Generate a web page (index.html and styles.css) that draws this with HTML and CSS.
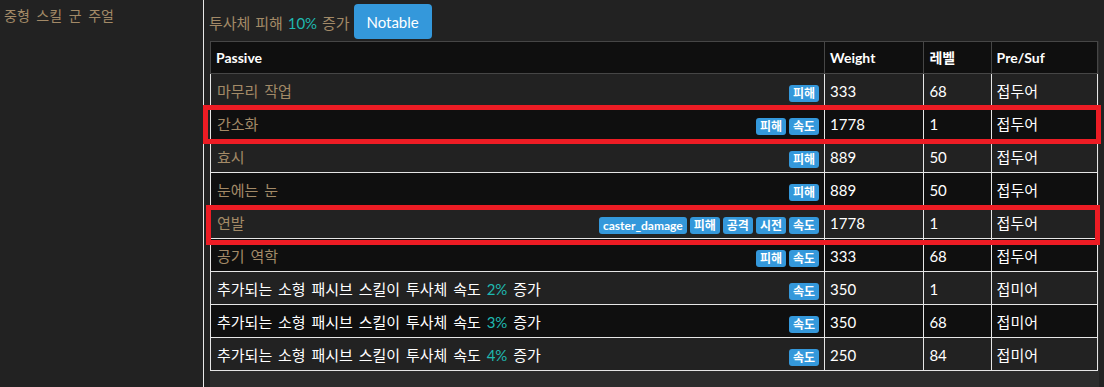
FILE: index.html
```html
<!DOCTYPE html>
<html lang="ko">
<head>
<meta charset="utf-8">
<link rel="stylesheet" href="styles.css">
</head>
<body>
<div class="page">
  <aside class="sidebar">
    <div class="side-item">중형 스킬 군 주얼</div>
  </aside>
  <main class="main">
    <div class="topline">
      <span class="title">투사체 피해 <span class="num">10%</span> 증가</span>
      <button class="btn">Notable</button>
    </div>
    <div class="table-wrap">
      <table class="mods">
        <thead>
          <tr><th class="c-passive">Passive</th><th class="c-weight">Weight</th><th class="c-level">레벨</th><th class="c-ps">Pre/Suf</th></tr>
        </thead>
        <tbody>
          <tr><td><div class="cell"><span class="name">마무리 작업</span><span class="tags"><span class="tag">피해</span></span></div></td><td>333</td><td>68</td><td>접두어</td></tr>
          <tr><td><div class="cell"><span class="name">간소화</span><span class="tags"><span class="tag">피해</span><span class="tag">속도</span></span></div></td><td>1778</td><td>1</td><td>접두어</td></tr>
          <tr><td><div class="cell"><span class="name">효시</span><span class="tags"><span class="tag">피해</span></span></div></td><td>889</td><td>50</td><td>접두어</td></tr>
          <tr><td><div class="cell"><span class="name">눈에는 눈</span><span class="tags"><span class="tag">피해</span></span></div></td><td>889</td><td>50</td><td>접두어</td></tr>
          <tr><td><div class="cell"><span class="name">연발</span><span class="tags"><span class="tag">caster_damage</span><span class="tag">피해</span><span class="tag">공격</span><span class="tag">시전</span><span class="tag">속도</span></span></div></td><td>1778</td><td>1</td><td>접두어</td></tr>
          <tr><td><div class="cell"><span class="name">공기 역학</span><span class="tags"><span class="tag">피해</span><span class="tag">속도</span></span></div></td><td>333</td><td>68</td><td>접두어</td></tr>
          <tr><td><div class="cell"><span class="name white">추가되는 소형 패시브 스킬이 투사체 속도 <span class="num">2%</span> 증가</span><span class="tags"><span class="tag">속도</span></span></div></td><td>350</td><td>1</td><td>접미어</td></tr>
          <tr><td><div class="cell"><span class="name white">추가되는 소형 패시브 스킬이 투사체 속도 <span class="num">3%</span> 증가</span><span class="tags"><span class="tag">속도</span></span></div></td><td>350</td><td>68</td><td>접미어</td></tr>
          <tr><td><div class="cell"><span class="name white">추가되는 소형 패시브 스킬이 투사체 속도 <span class="num">4%</span> 증가</span><span class="tags"><span class="tag">속도</span></span></div></td><td>250</td><td>84</td><td>접미어</td></tr>
        </tbody>
      </table>
    </div>
  </main>
</div>
<div class="highlight hl-1"></div>
<div class="highlight hl-2"></div>
</body>
</html>
```
FILE: styles.css
```css
html, body {
  margin: 0;
  padding: 0;
  height: 100%;
  background: #222222;
  font-family: Lato, "Noto Sans CJK KR", sans-serif;
  color: #ffffff;
  overflow: hidden;
}
.page {
  display: flex;
  height: 387px;
}
.sidebar {
  width: 203px;
  flex: none;
  border-right: 1px solid #e8e8e8;
  background: #222222;
}
.side-item {
  padding: 6px 4px;
  font-size: 14px;
  line-height: 20px;
  color: #a38a67;
  word-spacing: 3px;
}
.main {
  flex: 1;
  display: flex;
  flex-direction: column;
  padding: 4px 6px 0 6px;
  min-width: 0;
}
.topline {
  display: flex;
  align-items: center;
  gap: 4px;
  height: 35px;
  margin-bottom: 2px;
}
.title {
  font-size: 15px;
  color: #a38a67;
  margin-left: -1px;
  padding-top: 2px;
  word-spacing: 1px;
}
.num {
  color: #1fb8b0;
  word-spacing: 0;
}
.btn {
  height: 35px;
  width: 78px;
  border: none;
  border-radius: 4px;
  background: #3498db;
  color: #ffffff;
  font-family: Lato, "Noto Sans CJK KR", sans-serif;
  font-size: 15px;
  padding: 0;
}
.table-wrap {
  flex: 1;
  background: #2c2c2c;
  margin-right: -1px;
}
.mods {
  width: 888px;
  border-collapse: collapse;
  table-layout: fixed;
}
.mods th {
  background: #0f0f0f;
  border: 1px solid #464646;
  text-align: left;
  font-weight: bold;
  font-size: 14px;
  padding: 5px 5px;
  height: 21px;
  line-height: 21px;
}
.c-passive { width: 601px; }
.c-weight { width: 88px; }
.c-level { width: 56px; }
.c-ps { width: 95px; }
.mods td {
  border: 1px solid #e6e6e6;
  font-size: 15px;
  line-height: 22px;
  padding: 6px 5px 4px 5px;
  height: 22px;
  white-space: nowrap;
}
.mods tbody tr:nth-child(odd) td { background: #222222; }
.mods tbody tr:nth-child(even) td { background: #0f0f0f; }
.mods tbody td:first-child { padding-left: 6px; }
.cell {
  display: flex;
  align-items: center;
}
.name {
  color: #a38a67;
  word-spacing: 2px;
}
.name.white {
  color: #ffffff;
}
.tags {
  margin-left: auto;
  display: flex;
  gap: 3px;
  padding-top: 4px;
}
.tag {
  display: inline-block;
  background: #3498db;
  color: #ffffff;
  font-size: 12px;
  font-weight: bold;
  line-height: 17px;
  height: 17px;
  padding: 0 4px;
  border-radius: 3px;
}
.highlight {
  position: absolute;
  border: 5px solid #ed1c24;
  box-sizing: border-box;
  pointer-events: none;
}
.hl-1 {
  left: 203px;
  top: 105px;
  width: 898px;
  height: 39px;
}
.hl-2 {
  left: 206px;
  top: 205px;
  width: 894px;
  height: 40px;
}
```
